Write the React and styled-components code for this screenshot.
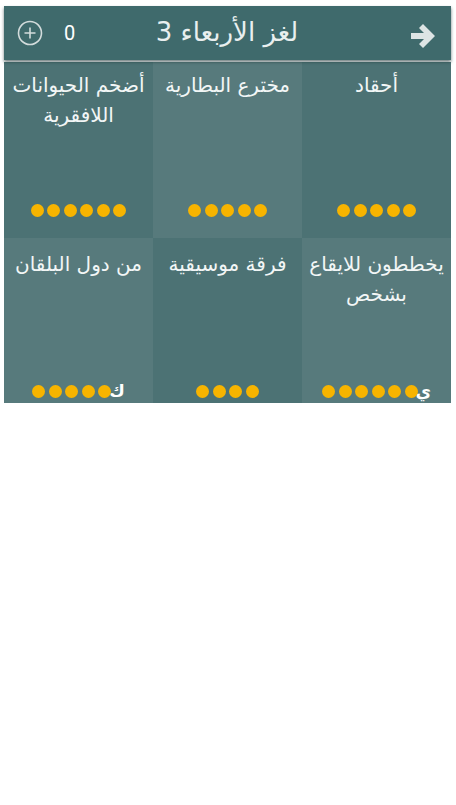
import React from 'react';
import styled, { createGlobalStyle } from 'styled-components';

const GlobalStyle = createGlobalStyle`
  html, body {
    margin: 0;
    padding: 0;
    background: #fff;
  }
  body {
    font-family: "DejaVu Sans", "Noto Sans", sans-serif;
  }
`;

const Screen = styled.div`
  margin: 6px 5px 0 4px;
`;

const Header = styled.header`
  position: relative;
  z-index: 1;
  height: 54px;
  display: flex;
  align-items: center;
  padding: 0 14px 0 13px;
  background-color: #3f6a6c;
  box-shadow: 0 2px 3px rgba(20, 45, 46, 0.6);
  color: #e8eeee;
`;

const Score = styled.div`
  display: flex;
  align-items: center;
  gap: 21px;
  width: 120px;
`;

const Count = styled.span`
  font-family: "Roboto", "DejaVu Sans", sans-serif;
  font-size: 20px;
  color: #fff;
`;

const Title = styled.h1`
  flex: 1;
  margin: 0 0 3px;
  text-align: center;
  font-size: 26px;
  font-weight: normal;
  direction: rtl;
  color: #e9efef;
`;

const Back = styled.div`
  width: 120px;
  display: flex;
  justify-content: flex-end;
  padding-top: 6px;
`;

const Grid = styled.div`
  direction: rtl;
  display: grid;
  grid-template-columns: repeat(3, 1fr);
  grid-template-rows: 176px 165px;
  margin-top: 2px;
`;

const Cell = styled.div`
  display: flex;
  flex-direction: column;
  align-items: center;
  justify-content: space-between;
  padding: ${p => (p.$last ? '11px' : '8px')} 4px ${p => (p.$last ? '4px' : '20px')};
  background-color: ${p => (p.$light ? '#577a7c' : '#4c7274')};
  color: #f2f6f6;
  overflow: hidden;
`;

const Clue = styled.div`
  font-size: 20px;
  line-height: 30px;
  text-align: center;
`;

const Slots = styled.div`
  display: flex;
  align-items: center;
  gap: 3.5px;
  height: 16px;
`;

const Dot = styled.span`
  width: 13px;
  height: 13px;
  border-radius: 50%;
  background-color: #f7b400;
`;

const Letter = styled.span`
  width: 13px;
  margin-left: -3px;
  font-size: 17px;
  font-weight: bold;
  line-height: 16px;
  color: #fff;
  text-align: center;
`;

const PlusIcon = () => (
  <svg width="26" height="26" viewBox="0 0 26 26">
    <circle cx="13" cy="13" r="11.5" fill="none" stroke="#d3dcdc" strokeWidth="1.6" />
    <path d="M13 7.5v11M7.5 13h11" stroke="#d3dcdc" strokeWidth="1.6" />
  </svg>
);

const ArrowIcon = () => (
  <svg width="28" height="24" viewBox="0 0 28 24">
    <path d="M2 9h13l-5-5 4-4 12 12-12 12-4-4 5-5H2z" fill="#dde4e4" />
  </svg>
);

const clues = [
  { text: 'أحقاد', slots: 5 },
  { text: 'مخترع البطارية', slots: 5 },
  { text: 'أضخم الحيوانات اللافقرية', slots: 6 },
  { text: 'يخططون للايقاع بشخص', slots: 6, letter: 'ي' },
  { text: 'فرقة موسيقية', slots: 4 },
  { text: 'من دول البلقان', slots: 5, letter: 'ك' },
];

const App = () => (
  <Screen>
    <GlobalStyle />
    <Header>
      <Score>
        <PlusIcon />
        <Count>0</Count>
      </Score>
      <Title>لغز الأربعاء 3</Title>
      <Back>
        <ArrowIcon />
      </Back>
    </Header>
    <Grid>
      {clues.map((c, i) => (
        <Cell key={i} $light={i % 2 === 1} $last={i > 2}>
          <Clue>{c.text}</Clue>
          <Slots>
            {c.letter && <Letter>{c.letter}</Letter>}
            {Array.from({ length: c.slots }).map((_, j) => (
              <Dot key={j} />
            ))}
          </Slots>
        </Cell>
      ))}
    </Grid>
  </Screen>
);

export default App;
